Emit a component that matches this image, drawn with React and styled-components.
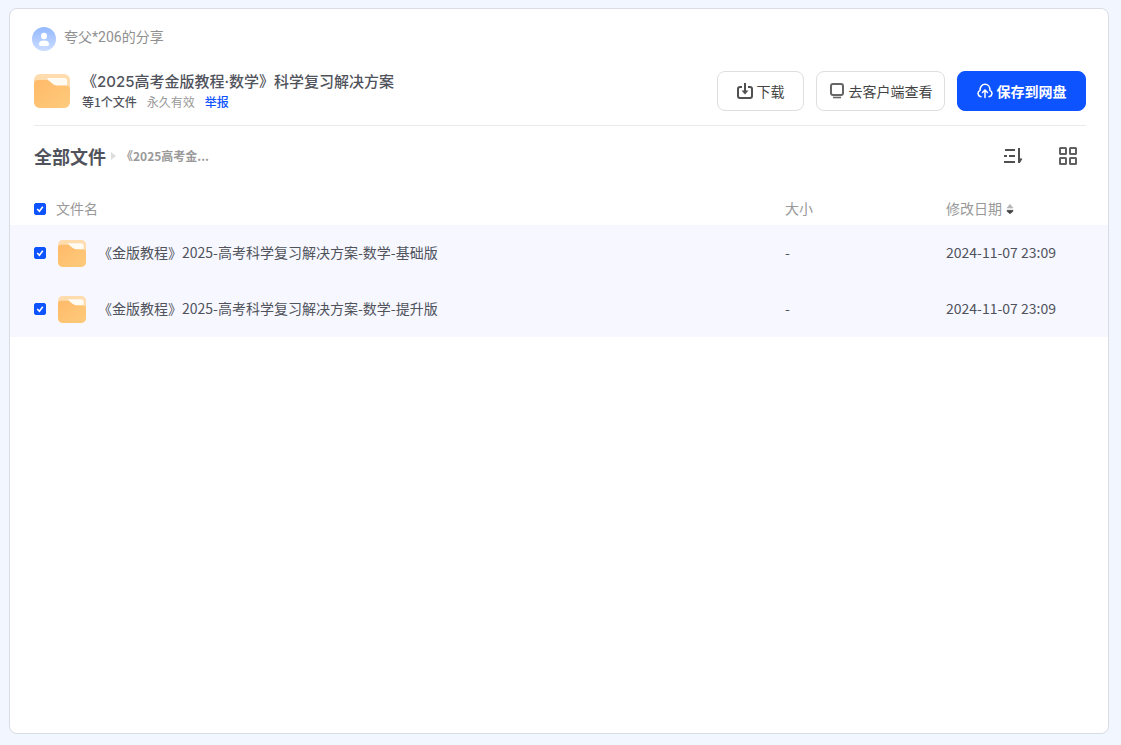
import React, { useState } from 'react';
import styled, { createGlobalStyle } from 'styled-components';

const files = [
  { id: 1, name: '《金版教程》2025-高考科学复习解决方案-数学-基础版', size: '-', date: '2024-11-07 23:09' },
  { id: 2, name: '《金版教程》2025-高考科学复习解决方案-数学-提升版', size: '-', date: '2024-11-07 23:09' },
];

const FolderIcon = ({ id, width, height }) => (
  <svg width={width} height={height} viewBox="0 0 36 34" preserveAspectRatio="none" aria-hidden="true">
    <defs>
      <linearGradient id={id} x1="0" y1="0" x2="1" y2="1">
        <stop offset="0" stopColor="#ffba69" />
        <stop offset="1" stopColor="#fdcb7c" />
      </linearGradient>
    </defs>
    <rect width="36" height="34" rx="6" fill="#ffdcae" />
    <path d="M13 4h17.5a2.5 2.5 0 0 1 2.5 2.5V16H20z" fill="#fffaf2" />
    <path d="M0 10q0-4 4-4h8q2 0 3.500 1.200l4 3.300q1.500 1 3.500 1h9q4 0 4 4V28a6 6 0 0 1-6 6H6a6 6 0 0 1-6-6z" fill={`url(#${id})`} />
  </svg>
);

const AvatarIcon = () => (
  <svg width="24" height="24" viewBox="0 0 24 24" aria-hidden="true">
    <defs>
      <linearGradient id="avatar" x1="0" y1="0" x2="0" y2="1">
        <stop offset="0" stopColor="#94b9ff" />
        <stop offset="1" stopColor="#ccdcff" />
      </linearGradient>
    </defs>
    <circle cx="12" cy="12" r="12" fill="url(#avatar)" />
    <ellipse cx="12" cy="9" rx="3" ry="3.300" fill="#fff" />
    <path d="M7 17.200c0-2.700 2-3.700 5-3.700s5 1 5 3.700c0 1.200-.8 1.800-2 1.800H9c-1.200 0-2-.6-2-1.800z" fill="#fff" />
  </svg>
);

const DownloadIcon = () => (
  <svg width="16" height="16" viewBox="0 0 16 16" fill="none" stroke="#505050" strokeWidth="2" aria-hidden="true">
    <path d="M5 4H3a2 2 0 0 0-2 2v7a2 2 0 0 0 2 2h10a2 2 0 0 0 2-2V6a2 2 0 0 0-2-2h-2" />
    <path d="M8 0v9" />
    <path d="M4.500 7.500h7L8 11.500z" fill="#505050" stroke="none" />
  </svg>
);

const ClientIcon = () => (
  <svg width="16" height="16" viewBox="0 0 16 16" fill="none" stroke="#666" strokeWidth="2" aria-hidden="true">
    <rect x="2" y="1" width="12" height="11" rx="2" />
    <path d="M4 14.500h8" strokeWidth="1.600" />
  </svg>
);

const CloudIcon = () => (
  <svg width="16" height="16" viewBox="0 0 16 16" fill="none" stroke="#fff" strokeWidth="1.500" strokeLinecap="round" aria-hidden="true">
    <path d="M4 13.700A3.300 3.300 0 0 1 3 7.400C3 4 5 1.300 8 1.300s5 2.700 5 6.100a3.300 3.300 0 0 1-1 6.300" />
    <path d="M8 14.500V7.500M5.500 9.500L8 7l2.500 2.500" />
  </svg>
);

const SortIcon = () => (
  <svg width="20" height="20" viewBox="0 0 20 20" fill="none" stroke="#505050" strokeWidth="2" aria-hidden="true">
    <path d="M2 4h10M1 10h3M6 10h6M1 16h11M16 2v15M18.500 12.500L16 16.500" />
  </svg>
);

const GridIcon = () => (
  <svg width="20" height="20" viewBox="0 0 20 20" fill="none" stroke="#606060" strokeWidth="2" aria-hidden="true">
    <rect x="2" y="2" width="6" height="6" rx=".5" />
    <rect x="12" y="2" width="6" height="6" rx=".5" />
    <rect x="2" y="12" width="6" height="6" rx=".5" />
    <rect x="12" y="12" width="6" height="6" rx=".5" />
  </svg>
);

const OrderIcon = () => (
  <svg width="8" height="10" viewBox="0 0 8 10" aria-hidden="true">
    <path d="M1 4L4 .3 7 4z" fill="#b5b5b5" stroke="#b5b5b5" strokeWidth=".6" />
    <path d="M1 6.300h6v1L4 9.800 1 7.300z" fill="#444" stroke="#444" strokeWidth=".6" />
  </svg>
);

const App = () => {
  const [selected, setSelected] = useState(files.map((file) => file.id));
  const allSelected = selected.length === files.length;

  const toggleAll = () => setSelected(allSelected ? [] : files.map((file) => file.id));
  const toggle = (id) => {
    setSelected(selected.includes(id) ? selected.filter((item) => item !== id) : [...selected, id]);
  };

  const fileRows = files.map((file) => (
    <StyledRow key={file.id} $selected={selected.includes(file.id)}>
      <td>
        <StyledNameCell>
          <StyledCheckbox
            id={`file-${file.id}`}
            checked={selected.includes(file.id)}
            onChange={() => toggle(file.id)}
          />
          <StyledFileLabel htmlFor={`file-${file.id}`}>
            <FolderIcon id={`folder-${file.id}`} width={28} height={27} />
            <StyledCellText>{file.name}</StyledCellText>
          </StyledFileLabel>
        </StyledNameCell>
      </td>
      <td><StyledCellText>{file.size}</StyledCellText></td>
      <td><StyledCellText>{file.date}</StyledCellText></td>
    </StyledRow>
  ));

  return (
    <>
      <GlobalStyle />
      <StyledCard>
        <StyledSharer>
          <AvatarIcon />
          <span>夸父*206的分享</span>
        </StyledSharer>
        <StyledHeader>
          <StyledShare>
            <FolderIcon id="folder-share" width={36} height={34} />
            <div>
              <StyledTitle>《2025高考金版教程·数学》科学复习解决方案</StyledTitle>
              <StyledMeta>
                <span>等1个文件</span>
                <StyledExpiry>永久有效</StyledExpiry>
                <a href="#report">举报</a>
              </StyledMeta>
            </div>
          </StyledShare>
          <StyledActions>
            <StyledButton><DownloadIcon />下载</StyledButton>
            <StyledButton $wide><ClientIcon />去客户端查看</StyledButton>
            <StyledButton $wide $primary><CloudIcon />保存到网盘</StyledButton>
          </StyledActions>
        </StyledHeader>
        <StyledToolbar>
          <StyledBreadcrumb>
            <StyledRootLink href="#all">全部文件</StyledRootLink>
            <svg width="5" height="8" viewBox="0 0 5 8" aria-hidden="true">
              <path d="M0 0l5 4-5 4z" fill="#ddd" />
            </svg>
            <StyledCurrent>《2025高考金...</StyledCurrent>
          </StyledBreadcrumb>
          <StyledViews>
            <StyledIconButton aria-label="排序"><SortIcon /></StyledIconButton>
            <StyledIconButton aria-label="网格视图"><GridIcon /></StyledIconButton>
          </StyledViews>
        </StyledToolbar>
        <StyledTable>
          <thead>
            <tr>
              <th>
                <StyledHeadName>
                  <StyledCheckbox id="all" checked={allSelected} onChange={toggleAll} />
                  <StyledHeadLabel htmlFor="all">文件名</StyledHeadLabel>
                </StyledHeadName>
              </th>
              <StyledSizeHead><StyledCellText>大小</StyledCellText></StyledSizeHead>
              <StyledDateHead>
                <StyledOrderButton>
                  <StyledCellText>修改日期</StyledCellText>
                  <OrderIcon />
                </StyledOrderButton>
              </StyledDateHead>
            </tr>
          </thead>
          <tbody>{fileRows}</tbody>
        </StyledTable>
      </StyledCard>
    </>
  );
}

export default App;

const GlobalStyle = createGlobalStyle`
  * {
    box-sizing: border-box;
  }

  body {
    background: #f1f6ff;
    color: #50535b;
    font-family: 'Noto Sans CJK SC', sans-serif;
    font-size: 14px;
    line-height: 20px;
    margin: 0;
  }

  a {
    color: #0d53ff;
    text-decoration: none;
  }

  button {
    background: none;
    border: 0;
    color: inherit;
    cursor: pointer;
    font: inherit;
    padding: 0;
  }

  svg {
    display: block;
    flex-shrink: 0;
  }
`;

const StyledCard = styled.main`
  background: #fff;
  border: 1px solid #d9dce3;
  border-radius: 8px;
  margin: 8px 12px 11px 9px;
  min-height: calc(100vh - 19px);
  padding-top: 18px;
`;

const StyledSharer = styled.div`
  align-items: flex-start;
  color: #8f8f8f;
  display: flex;
  font-family: Roboto, 'Noto Sans CJK SC', sans-serif;
  gap: 8px;
  padding: 0 22px;
`;

const StyledHeader = styled.header`
  align-items: center;
  border-bottom: 1px solid #ebebeb;
  display: flex;
  justify-content: space-between;
  margin: 20px 22px 0 24px;
  padding-bottom: 14px;
`;

const StyledShare = styled.div`
  align-items: center;
  display: flex;
  gap: 12px;
`;

const StyledTitle = styled.h1`
  font-family: Inter, 'Noto Sans CJK SC', sans-serif;
  font-size: 15px;
  font-weight: 500;
  line-height: 22px;
  margin: 0;
`;

const StyledMeta = styled.div`
  display: flex;
  font-size: 12px;
  font-weight: 500;
  gap: 10px;
  line-height: 18px;
`;

const StyledExpiry = styled.span`
  color: #999;
  font-weight: 400;
`;

const StyledActions = styled.div`
  display: flex;
  gap: 12px;
`;

const StyledButton = styled.button.attrs({ type: 'button' })`
  && {
    align-items: center;
    background: ${props => props.$primary ? '#0d53ff' : '#fff'};
    border: 1px solid ${props => props.$primary ? '#0d53ff' : '#dedede'};
    border-radius: 8px;
    color: ${props => props.$primary ? '#fff' : '#444'};
    display: flex;
    font-weight: ${props => props.$primary ? 700 : 400};
    gap: 4px;
    height: 40px;
    justify-content: center;
    width: ${props => props.$wide ? '129px' : '87px'};
  }
`;

const StyledToolbar = styled.div`
  align-items: center;
  display: flex;
  height: 60px;
  justify-content: space-between;
  margin-bottom: 6px;
  padding: 0 30px 0 24px;
`;

const StyledBreadcrumb = styled.nav`
  align-items: center;
  display: flex;
  gap: 5px;
`;

const StyledRootLink = styled.a`
  && {
    color: #50535b;
    font-size: 18px;
    font-weight: 700;
  }
`;

const StyledCurrent = styled.span`
  color: #999;
  font-size: 12px;
  font-weight: 700;
`;

const StyledViews = styled.div`
  display: flex;
  gap: 35px;
`;

const StyledIconButton = styled.button.attrs({ type: 'button' })`
  height: 20px;
  width: 20px;
`;

const StyledTable = styled.table`
  border-collapse: collapse;
  table-layout: fixed;
  width: 100%;

  th {
    color: #999;
    font-weight: 400;
    height: 33px;
    padding: 0;
    text-align: left;
  }

  td {
    height: 56px;
    padding: 0;
  }
`;

const StyledSizeHead = styled.th`
  width: 161px;
`;

const StyledDateHead = styled.th`
  width: 162px;
`;

const StyledRow = styled.tr`
  background: ${props => props.$selected ? '#f6f7ff' : '#fff'};
`;

/* the CJK face sits low in its line box */
const StyledCellText = styled.span`
  display: block;
  padding-bottom: 2px;
`;

const StyledHeadLabel = styled.label`
  padding-bottom: 2px;
`;

const StyledHeadName = styled.div`
  align-items: center;
  display: flex;
  gap: 10px;
  padding-left: 24px;
`;

const StyledNameCell = styled(StyledHeadName)`
  gap: 12px;
`;

const StyledFileLabel = styled.label`
  align-items: center;
  display: flex;
  gap: 12px;
`;

const StyledOrderButton = styled.button.attrs({ type: 'button' })`
  align-items: center;
  display: flex;
  gap: 4px;
`;

const StyledCheckbox = styled.input.attrs({ type: 'checkbox' })`
  appearance: none;
  border: 1px solid #c4c8d0;
  border-radius: 2px;
  flex-shrink: 0;
  height: 12px;
  margin: 0;
  width: 12px;

  &:checked {
    background: #0d53ff url("data:image/svg+xml,%3Csvg xmlns='http://www.w3.org/2000/svg' viewBox='0 0 12 12' fill='none' stroke='white' stroke-width='1.6'%3E%3Cpath d='M3.200 6l2.200 2.200L8.800 3.800'/%3E%3C/svg%3E") center / 12px 12px no-repeat;
    border-color: #0d53ff;
  }
`;
